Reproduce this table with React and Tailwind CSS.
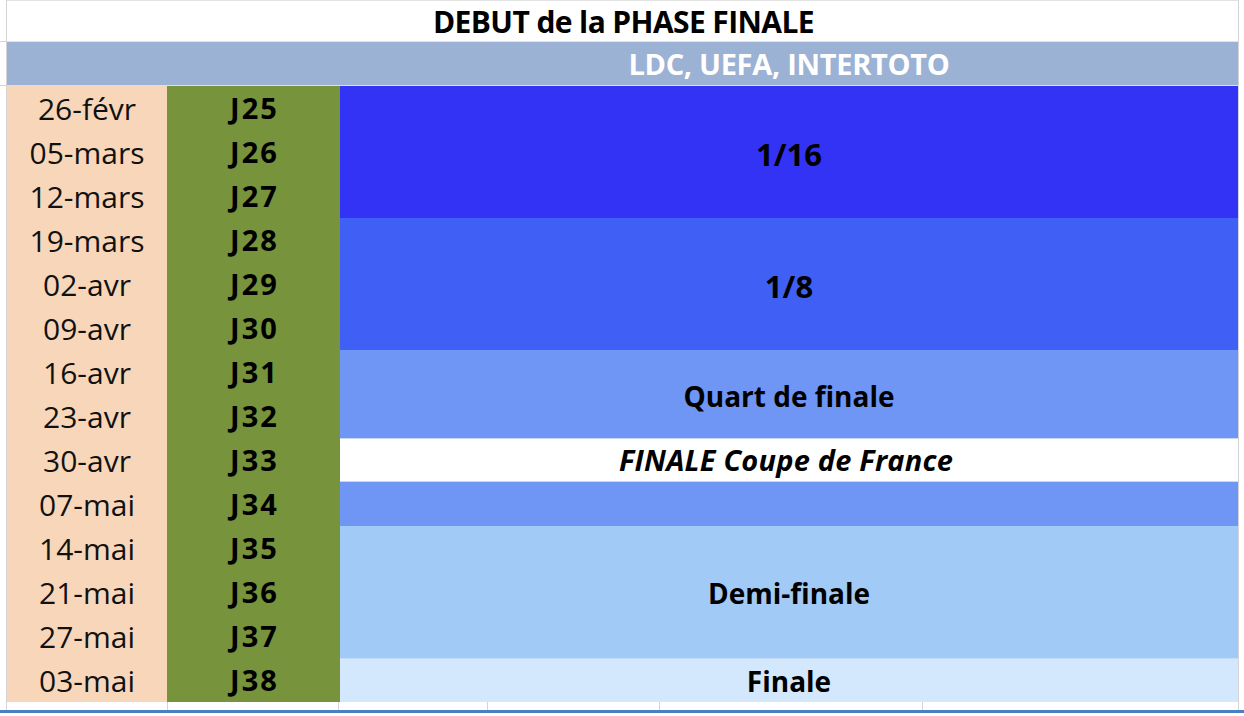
const rows = [
  ["26-févr", "J25"],
  ["05-mars", "J26"],
  ["12-mars", "J27"],
  ["19-mars", "J28"],
  ["02-avr", "J29"],
  ["09-avr", "J30"],
  ["16-avr", "J31"],
  ["23-avr", "J32"],
  ["30-avr", "J33"],
  ["07-mai", "J34"],
  ["14-mai", "J35"],
  ["21-mai", "J36"],
  ["27-mai", "J37"],
  ["03-mai", "J38"],
];

const App = () => {
  return (
    <div
      className="w-[1244px] h-[716px] bg-white overflow-hidden text-black"
      style={{ fontFamily: '"Open Sans", "Noto Sans", sans-serif' }}
    >
      <div className="flex h-[702px]">
        {/* left gutter */}
        <div className="w-[7px] border-r border-[#d4d4d4] flex flex-col">
          <div className="h-[42px] border-b border-[#d4d4d4]" />
          <div className="h-[44px] border-b border-[#d4d4d4]" />
        </div>

        <div className="w-[1231px] flex flex-col">
          {/* title row */}
          <div className="h-[42px] border-t border-b border-[#e2e2e2] flex items-center justify-center pl-[2px] text-[30px] font-bold tracking-[-0.6px]">
            DEBUT de la PHASE FINALE
          </div>

          {/* competition header */}
          <div className="h-[44px] bg-[#9bb2d4] border-b border-[#d9e1ee] flex">
            <div className="w-[333px]" />
            <div className="flex-1 flex items-center justify-center text-white font-bold text-[29px] tracking-[-0.3px]">
              LDC, UEFA, INTERTOTO
            </div>
          </div>

          {/* calendar */}
          <div className="flex flex-1">
            <div className="w-[160px] bg-[#f8d6b9] flex flex-col">
              {rows.map(([d]) => (
                <div key={d} className="h-[44px] flex items-center justify-center text-[30px] text-[#111]">
                  {d}
                </div>
              ))}
            </div>
            <div className="w-[173px] bg-[#77933c] flex flex-col">
              {rows.map(([, j]) => (
                <div key={j} className="h-[44px] flex items-center justify-center text-[29px] font-bold tracking-[2px] pl-[2px]">
                  {j}
                </div>
              ))}
            </div>
            <div className="flex-1 flex flex-col text-[28px] font-bold">
              <div className="h-[132px] bg-[#3333f5] flex items-center justify-center text-[31px] pt-[4px]">1/16</div>
              <div className="h-[132px] bg-[#3f5ff5] flex items-center justify-center text-[31px] pt-[4px]">1/8</div>
              <div className="h-[88px] bg-[#6f96f5] flex items-center justify-center pt-[4px]">Quart de finale</div>
              <div className="h-[44px] bg-white border-t border-b border-[#c9d8f5] flex items-center justify-center italic text-[29px] pr-[6px] tracking-[0.2px]">
                FINALE Coupe de France
              </div>
              <div className="h-[44px] bg-[#6f96f5]" />
              <div className="h-[132px] bg-[#a2caf7] flex items-center justify-center pt-[2px]">Demi-finale</div>
              <div className="h-[44px] bg-[#d3e8fc] border-t border-[#c3dcf8] flex items-center justify-center">Finale</div>
            </div>
          </div>
        </div>

        <div className="flex-1 border-l border-[#d4d4d4]" />
      </div>

      {/* below table */}
      <div className="flex h-[8px]">
        <div className="w-[7px] border-r border-[#d4d4d4]" />
        <div className="w-[161px] border-r border-[#d4d4d4]" />
        <div className="w-[171px] border-r border-[#d4d4d4]" />
        <div className="w-[149px] border-r border-[#d4d4d4]" />
        <div className="w-[172px] border-r border-[#d4d4d4]" />
        <div className="w-[263px] border-r border-[#d4d4d4]" />
        <div className="w-[316px] border-r border-[#d4d4d4]" />
      </div>
      <div className="h-[3px] bg-[#4a7fc1]" />
    </div>
  );
};

export default App;
